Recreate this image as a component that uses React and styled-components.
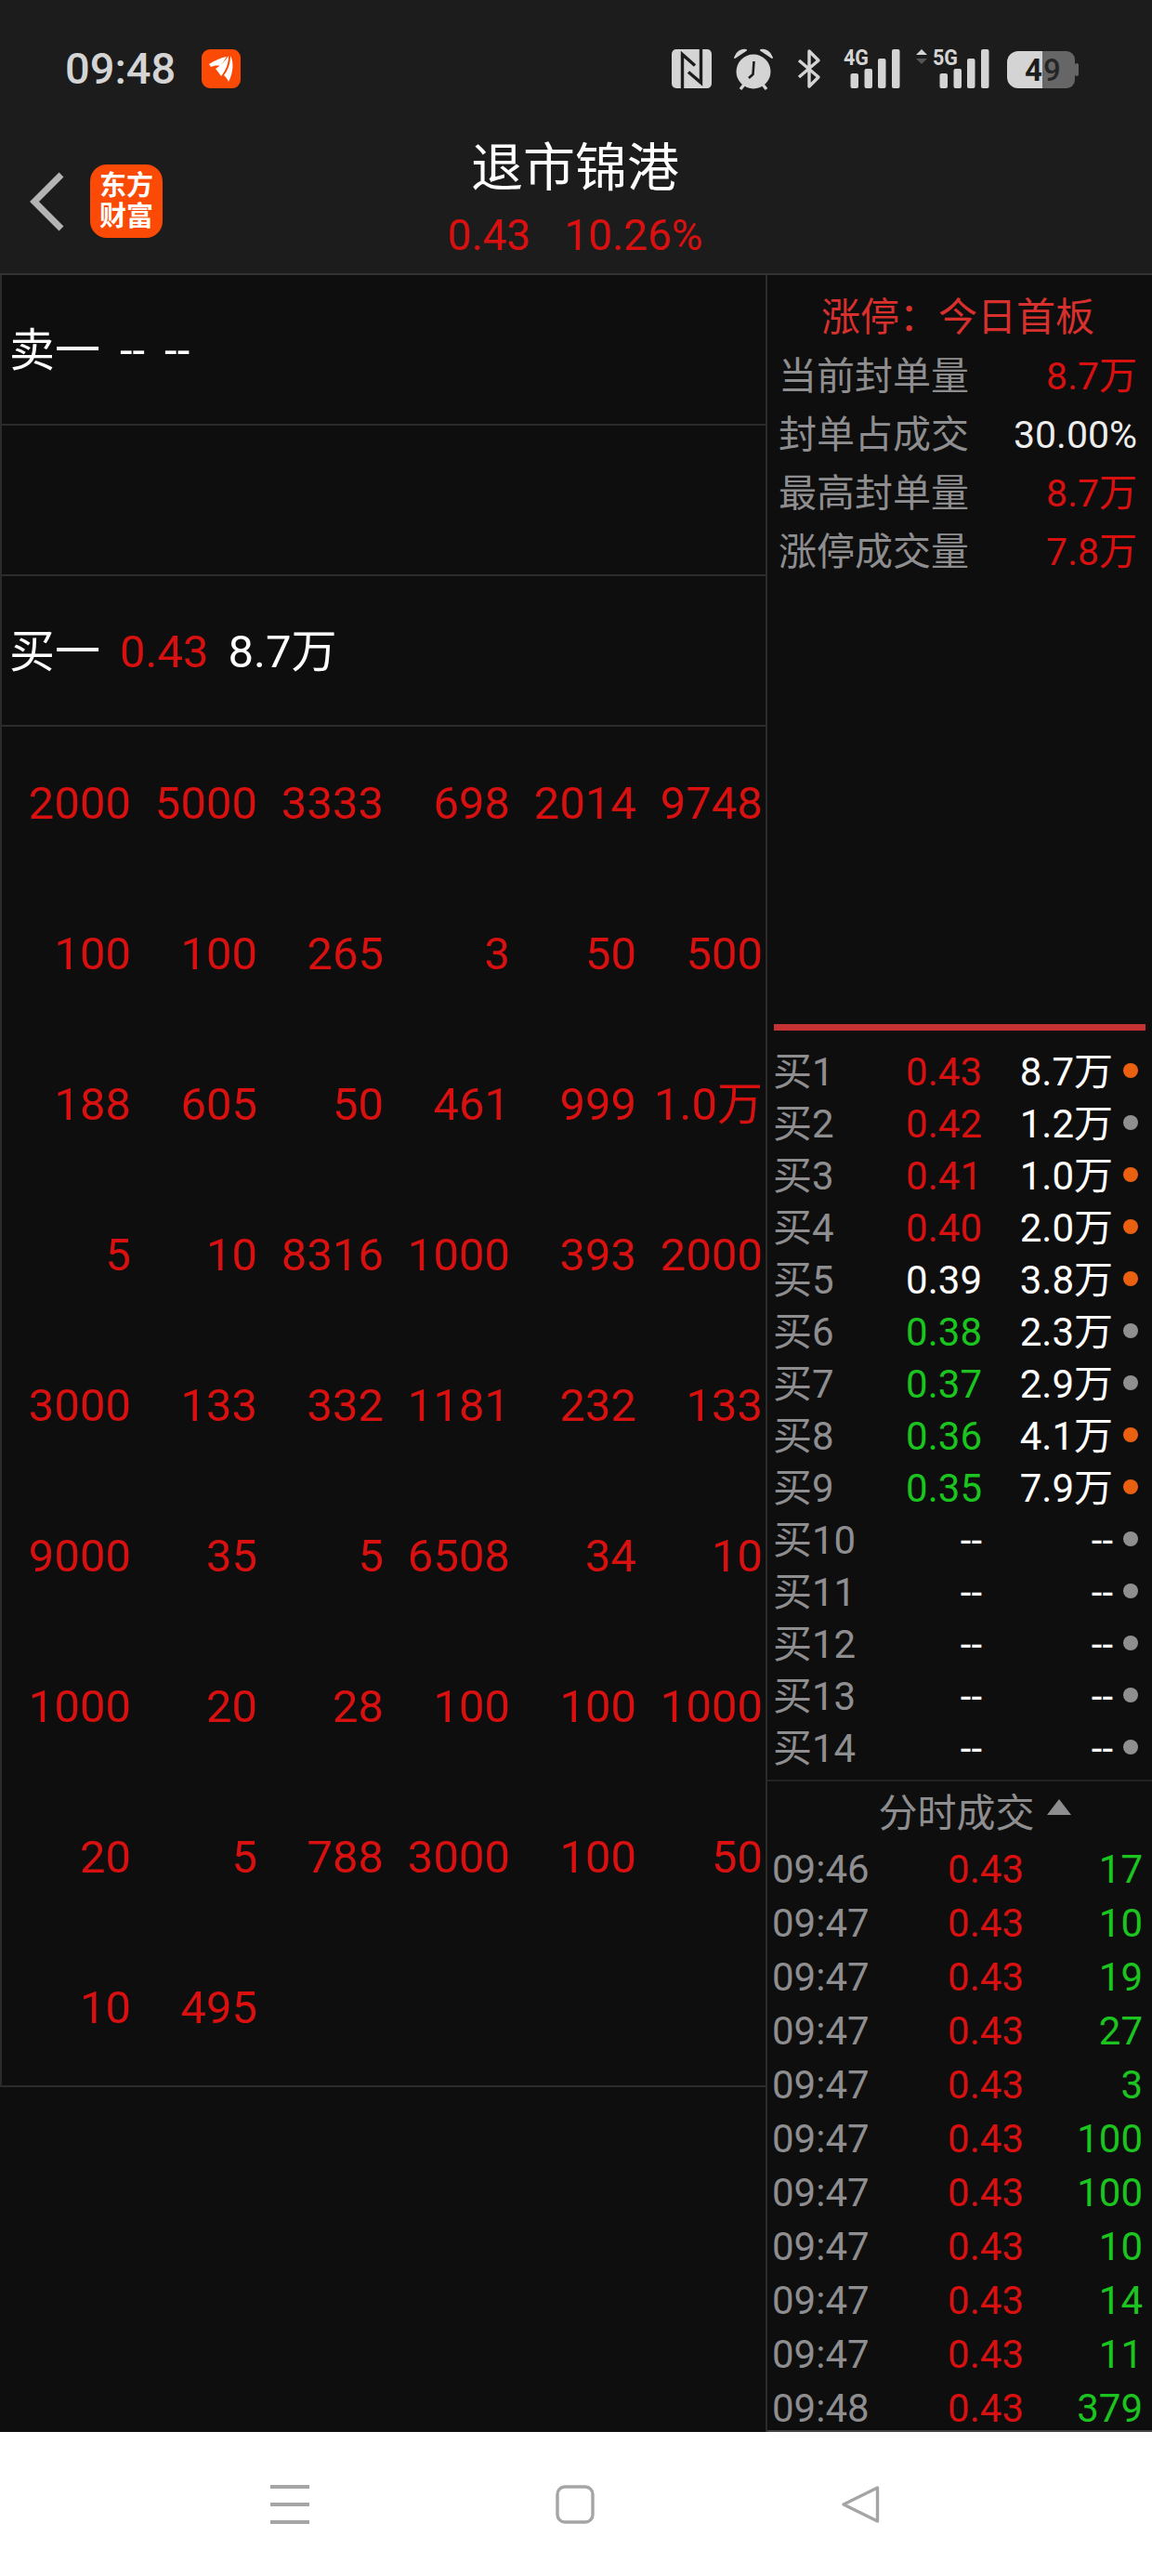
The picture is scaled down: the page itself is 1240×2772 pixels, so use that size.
import React from "react";
import styled, { createGlobalStyle } from "styled-components";

const RED = "#d81010";
const GREEN = "#1bc41f";
const GRAY = "#8e8e90";
const ICON = "#d4d4d4";
const LINE = "#2b2b2b";

const GlobalStyle = createGlobalStyle`
  html, body {
    margin: 0;
    padding: 0;
    background: #0e0e0e;
  }
  * {
    box-sizing: border-box;
  }
`;

const trades = [
  [2000, 5000, 3333, 698, 2014, 9748],
  [100, 100, 265, 3, 50, 500],
  [188, 605, 50, 461, 999, "1.0万"],
  [5, 10, 8316, 1000, 393, 2000],
  [3000, 133, 332, 1181, 232, 133],
  [9000, 35, 5, 6508, 34, 10],
  [1000, 20, 28, 100, 100, 1000],
  [20, 5, 788, 3000, 100, 50],
  [10, 495],
];

const limitRows = [
  { label: "当前封单量", value: "8.7万", color: RED },
  { label: "封单占成交", value: "30.00%", color: "#ededed" },
  { label: "最高封单量", value: "8.7万", color: RED },
  { label: "涨停成交量", value: "7.8万", color: RED },
];

const book = [
  ["买1", "0.43", "8.7万", RED, true],
  ["买2", "0.42", "1.2万", RED, false],
  ["买3", "0.41", "1.0万", RED, true],
  ["买4", "0.40", "2.0万", RED, true],
  ["买5", "0.39", "3.8万", "#fff", true],
  ["买6", "0.38", "2.3万", GREEN, false],
  ["买7", "0.37", "2.9万", GREEN, false],
  ["买8", "0.36", "4.1万", GREEN, true],
  ["买9", "0.35", "7.9万", GREEN, true],
  ["买10", "--", "--", "#fff", false],
  ["买11", "--", "--", "#fff", false],
  ["买12", "--", "--", "#fff", false],
  ["买13", "--", "--", "#fff", false],
  ["买14", "--", "--", "#fff", false],
];

const ticks = [
  ["09:46", 17],
  ["09:47", 10],
  ["09:47", 19],
  ["09:47", 27],
  ["09:47", 3],
  ["09:47", 100],
  ["09:47", 100],
  ["09:47", 10],
  ["09:47", 14],
  ["09:47", 11],
  ["09:48", 379],
];

const Signal = ({ label, x }) => (
  <text x={x} y="17" fontFamily="Roboto, sans-serif" fontWeight="700" fontSize="24" fill={ICON} textLength="27" lengthAdjust="spacingAndGlyphs">
    {label}
  </text>
);

const Bars = ({ x }) => (
  <g fill={ICON}>
    <rect x={x} y="26" width="8.5" height="16" rx="2" />
    <rect x={x + 15} y="21" width="8.5" height="21" rx="2" />
    <rect x={x + 29.5} y="10" width="8.5" height="32" rx="2" />
    <rect x={x + 44.5} y="0" width="8.5" height="42" rx="2" />
  </g>
);

const App = () => (
  <Page>
    <GlobalStyle />
    <Header>
      <StatusBar>
        <Clock>09:48</Clock>
        <AppBadge viewBox="0 0 42 42">
          <rect width="42" height="42" rx="9" fill="#fa4a06" />
          <path d="M8 16 C14 12 21 9 27 8 C25 12 22 15 20 18 C17 17 12 18 10 19 Z" fill="#fff" />
          <path d="M29 7 C29 14 27 22 21 29 C19 26 17 23 15 21 C20 18 26 12 29 7 Z" fill="#fff" />
          <path d="M31 7 C35 14 34 26 29 35 C28 32 26 30 24 28 C29 22 31 14 31 7 Z" fill="#fff" />
        </AppBadge>
        <StatusIcons>
          <StatusIcon width="43" height="42" viewBox="0 0 43 42">
            <rect width="43" height="42" rx="5" fill={ICON} />
            <path d="M11.5 42 V5.5 L25 17.5 M31.5 0 V36 L18 24.5" fill="none" stroke="#1c1c1c" strokeWidth="3.4" />
          </StatusIcon>
          <StatusIcon $gap={23} width="44" height="44" viewBox="0 0 44 44">
            <circle cx="22" cy="24" r="18.5" fill={ICON} />
            <path d="M2 9 C4 3 9 0 14 1 Z M42 9 C40 3 35 0 30 1 Z" fill={ICON} stroke={ICON} strokeWidth="2" strokeLinejoin="round" />
            <path d="M8 43 L12 38 M36 43 L32 38" stroke={ICON} strokeWidth="3.4" />
            <path d="M22.5 13 L21.5 27 L17 31" fill="none" stroke="#1c1c1c" strokeWidth="2.6" />
          </StatusIcon>
          <StatusIcon $gap={25} width="26" height="42" viewBox="0 0 26 42">
            <path d="M2 12 L23 30 L13 40 V2 L23 12 L2 30" fill="none" stroke={ICON} strokeWidth="3.4" strokeLinejoin="round" />
          </StatusIcon>
          <StatusIcon $gap={24} width="61" height="42" viewBox="0 0 61 42">
            <Signal label="4G" x="0" />
            <Bars x={7.5} />
          </StatusIcon>
          <StatusIcon $gap={17} width="78" height="42" viewBox="0 0 78 42">
            <path d="M6 0 L12 6 H0 Z" fill={ICON} />
            <path d="M6 16 L12 10 H0 Z" fill="#555" />
            <Signal label="5G" x="18" />
            <Bars x={25.5} />
          </StatusIcon>
          <StatusIcon $gap={20} width="77" height="40" viewBox="0 0 77 40">
            <path d="M38 0 H12 A12 12 0 0 0 0 12 V28 A12 12 0 0 0 12 40 H38 Z" fill={ICON} />
            <path d="M38 0 H64 A9 9 0 0 1 73 9 V31 A9 9 0 0 1 64 40 H38 Z" fill="#666" />
            <rect x="73" y="13" width="4" height="14" rx="2" fill="#666" />
            <text x="38" y="32" textAnchor="end" fontFamily="Roboto, sans-serif" fontWeight="700" fontSize="33" fill="#1c1c1c">4</text>
            <text x="39" y="32" fontFamily="Roboto, sans-serif" fontWeight="500" fontSize="33" fill="#262626">9</text>
          </StatusIcon>
        </StatusIcons>
      </StatusBar>
      <TitleBar>
        <TitleLeft>
          <BackIcon viewBox="0 0 38 64">
            <path d="M34 3 L5 32 L34 61" fill="none" stroke="#b4b4b4" strokeWidth="7" />
          </BackIcon>
          <Logo>东方<br />财富</Logo>
        </TitleLeft>
        <TitleCenter>
          <StockName>退市锦港</StockName>
          <StockQuote>
            <span>0.43</span>
            <span>10.26%</span>
          </StockQuote>
        </TitleCenter>
      </TitleBar>
    </Header>
    <Main>
      <LeftPanel>
        <QuoteRow>
          <QuoteCell>卖一</QuoteCell>
          <QuoteCell>--</QuoteCell>
          <QuoteCell>--</QuoteCell>
        </QuoteRow>
        <QuoteRow />
        <QuoteRow>
          <QuoteCell>买一</QuoteCell>
          <QuoteCell $color={RED}>0.43</QuoteCell>
          <QuoteCell>8.7万</QuoteCell>
        </QuoteRow>
        <TradeGrid>
          {trades.flat().map((value, i) => (
            <TradeCell key={i}>{value}</TradeCell>
          ))}
        </TradeGrid>
      </LeftPanel>
      <RightPanel>
        <LimitBox>
          <LimitTitle>涨停：今日首板</LimitTitle>
          {limitRows.map((row) => (
            <LimitRow key={row.label}>
              <span>{row.label}</span>
              <LimitValue $color={row.color}>{row.value}</LimitValue>
            </LimitRow>
          ))}
        </LimitBox>
        <RedBar />
        <BookList>
          {book.map(([label, price, volume, color, hot]) => (
            <BookRow key={label}>
              <BookLabel>{label}</BookLabel>
              <BookNumber $color={color}>{price}</BookNumber>
              <BookNumber $color="#fff">{volume}</BookNumber>
              <Dot $hot={hot} />
            </BookRow>
          ))}
        </BookList>
        <TickHeader>
          分时成交<TickArrow />
        </TickHeader>
        {ticks.map(([time, volume], i) => (
          <TickRow key={i}>
            <BookLabel>{time}</BookLabel>
            <BookNumber $color={RED}>0.43</BookNumber>
            <BookNumber $color={GREEN}>{volume}</BookNumber>
          </TickRow>
        ))}
      </RightPanel>
    </Main>
    <NavBar>
      <NavIcon viewBox="0 0 42 42">
        <path d="M0 2 H42 M0 21 H42 M0 40 H42" stroke="#a5a5a5" strokeWidth="4" strokeLinecap="round" />
      </NavIcon>
      <NavIcon viewBox="0 0 42 42">
        <rect x="2" y="2" width="38" height="38" rx="8" fill="none" stroke="#a5a5a5" strokeWidth="3.4" />
      </NavIcon>
      <NavIcon viewBox="0 0 42 42">
        <path d="M39.5 3 V39 L3 21 Z" fill="none" stroke="#a5a5a5" strokeWidth="3.4" strokeLinejoin="round" />
      </NavIcon>
    </NavBar>
  </Page>
);

export default App;

const Page = styled.div`
  width: 1240px;
  height: 2772px;
  display: flex;
  flex-direction: column;
  overflow: hidden;
  font-family: Roboto, "Noto Sans CJK SC", sans-serif;
  background: #0e0e0e;
`;
const Header = styled.header`
  height: 296px;
  flex: none;
  background: #1c1c1c;
  border-bottom: 2px solid #333;
`;
const StatusBar = styled.div`
  height: 148px;
  padding: 53px 79px 0 70px;
  display: flex;
  align-items: flex-start;
`;
const Clock = styled.div`
  width: 147px;
  height: 42px;
  font-size: 47px;
  line-height: 42px;
  font-weight: 500;
  color: ${ICON};
`;
const AppBadge = styled.svg`
  width: 42px;
  height: 42px;
  display: block;
`;
const StatusIcons = styled.div`
  margin-left: auto;
  display: flex;
  align-items: flex-start;
`;
const StatusIcon = styled.svg`
  display: block;
  flex: none;
  margin-left: ${(p) => p.$gap || 0}px;
  overflow: visible;
  &:last-child {
    margin-top: 2px;
  }
`;
const TitleBar = styled.div`
  display: grid;
  grid-template-columns: 1fr auto 1fr;
`;
const TitleLeft = styled.div`
  display: flex;
  align-items: center;
  padding: 29px 0 0 32px;
  align-self: start;
`;
const BackIcon = styled.svg`
  width: 38px;
  height: 64px;
  display: block;
`;
const Logo = styled.div`
  width: 78px;
  height: 79px;
  margin-left: 27px;
  border-radius: 18px;
  background: #fa4a06;
  color: #fff;
  font-size: 29px;
  font-weight: 700;
  line-height: 33px;
  text-align: center;
  padding-top: 7px;
`;
const TitleCenter = styled.div`
  padding: 3px 2px 0 0;
  text-align: center;
`;
const StockName = styled.div`
  font-size: 56px;
  line-height: 60px;
  color: #fff;
`;
const StockQuote = styled.div`
  margin-top: 12px;
  display: flex;
  justify-content: center;
  gap: 36px;
  font-size: 46px;
  line-height: 60px;
  color: ${RED};
`;
const Main = styled.main`
  flex: 1;
  min-height: 0;
  display: grid;
  grid-template-columns: 826px 414px;
`;
const LeftPanel = styled.section`
  border-right: 2px solid ${LINE};
`;
const QuoteRow = styled.div`
  height: 162px;
  display: flex;
  align-items: center;
  gap: 21px;
  padding: 4px 0 0 8px;
  border-left: 2px solid ${LINE};
  border-bottom: 2px solid ${LINE};
`;
const QuoteCell = styled.span`
  font-size: 49px;
  line-height: 60px;
  color: ${(p) => p.$color || "#fff"};
`;
const TradeGrid = styled.div`
  height: 1464px;
  display: grid;
  grid-template-columns: repeat(6, 1fr);
  grid-auto-rows: 162px;
  padding: 2px 3px 0 3px;
  border-left: 2px solid ${LINE};
  border-bottom: 2px solid ${LINE};
`;
const TradeCell = styled.span`
  font-size: 49px;
  line-height: 162px;
  text-align: right;
  color: ${RED};
`;
const RightPanel = styled.section`
  min-height: 0;
  overflow: hidden;
  border-bottom: 2px solid #444;
`;
const LimitBox = styled.div`
  height: 806px;
  padding: 16px 16px 0 12px;
`;
const LimitTitle = styled.div`
  height: 60px;
  font-size: 42px;
  line-height: 60px;
  color: #d8302d;
  text-align: center;
  margin-bottom: 1px;
`;
const LimitRow = styled.div`
  height: 63px;
  display: flex;
  justify-content: space-between;
  align-items: center;
  font-size: 41px;
  line-height: 56px;
  color: ${GRAY};
`;
const LimitValue = styled.span`
  color: ${(p) => p.$color};
`;
const RedBar = styled.div`
  height: 7px;
  margin: 0 7px;
  background: #c43234;
`;
const BookList = styled.div`
  padding: 17px 0 5px 6px;
  border-bottom: 2px solid #222;
`;
const BookRow = styled.div`
  height: 56px;
  display: grid;
  grid-template-columns: 132px 93px 141px 1fr;
  align-items: center;
  font-size: 42px;
  line-height: 56px;
`;
const BookLabel = styled.span`
  color: ${GRAY};
`;
const BookNumber = styled.span`
  text-align: right;
  color: ${(p) => p.$color};
`;
const Dot = styled.span`
  width: 16px;
  height: 16px;
  margin: 0 0 4px 11px;
  border-radius: 50%;
  background: ${(p) => (p.$hot ? "#ea6010" : "#8f8f92")};
`;
const TickHeader = styled.div`
  height: 66px;
  padding: 0 0 6px 32px;
  display: flex;
  align-items: center;
  justify-content: center;
  font-size: 42px;
  color: ${GRAY};
`;
const TickArrow = styled.i`
  width: 0;
  height: 0;
  margin: 0 0 6px 13px;
  border-left: 13px solid transparent;
  border-right: 13px solid transparent;
  border-bottom: 17px solid ${GRAY};
`;
const TickRow = styled.div`
  height: 58px;
  display: grid;
  grid-template-columns: 142px 129px 128px;
  align-items: center;
  padding-left: 5px;
  font-size: 42px;
  line-height: 58px;
`;
const NavBar = styled.nav`
  height: 155px;
  flex: none;
  background: #fff;
  padding-right: 2px;
  display: grid;
  grid-template-columns: repeat(3, 307px);
  justify-content: center;
  place-items: center;
`;
const NavIcon = styled.svg`
  width: 42px;
  height: 42px;
  display: block;
`;
